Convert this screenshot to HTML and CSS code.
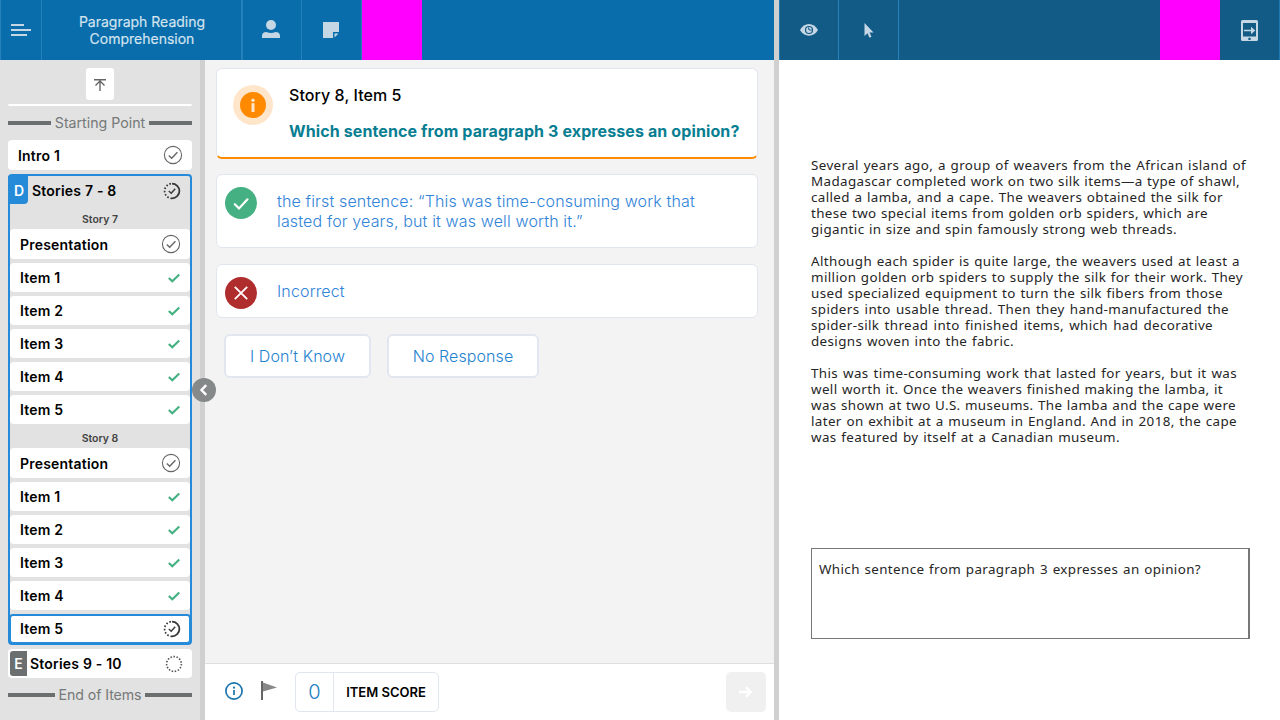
FILE: index.html
```html
<!DOCTYPE html>
<html lang="en">
<head>
<meta charset="utf-8">
<title>Paragraph Reading Comprehension</title>
<link rel="stylesheet" href="styles.css">
</head>
<body>
<svg class="defs" width="0" height="0">
  <symbol id="done" viewBox="0 0 20 20"><circle cx="10" cy="10" r="8.6" fill="none" stroke="#666" stroke-width="1.1"/><path d="M5.8 10.5 8.7 13.2 14.4 7.2" fill="none" stroke="#666" stroke-width="1.4"/></symbol>
  <symbol id="progress" viewBox="0 0 20 20"><path d="M10 2.600a7.400 7.400 0 0 1 0 14.800" fill="none" stroke="#383838" stroke-width="1.800"/><path d="M10 17.400a7.400 7.400 0 0 1 0-14.800" fill="none" stroke="#383838" stroke-width="1.700" stroke-dasharray="1.6 1.8"/><path d="M6.8 10 9.2 12.2 13.2 7.7" fill="none" stroke="#383838" stroke-width="1.4"/></symbol>
  <symbol id="pending" viewBox="0 0 20 20"><circle cx="10" cy="10" r="7.4" fill="none" stroke="#555" stroke-width="1.6" stroke-dasharray="1.5 1.6"/></symbol>
  <symbol id="check" viewBox="0 0 12 10"><path d="M.8 5 4.3 8.2 11.3 1.5" fill="none" stroke="#45b081" stroke-width="2.2"/></symbol>
</svg>
<div class="app">
  <section class="examiner">
    <header class="bar bar-main">
      <div class="cell menu"><svg width="20" height="12"><path d="M0 1h13M0 6h20M0 11h16" stroke="#c5d6e4" stroke-width="2"/></svg></div>
      <div class="cell heading">Paragraph Reading<br>Comprehension</div>
      <div class="cell person"><svg width="18" height="18"><circle cx="9" cy="5" r="5" fill="#c5d6e4"/><path d="M0 18v-2q0-4 4.500-4 4.500 1.800 9 0 4.500 0 4.500 4v2z" fill="#c5d6e4"/></svg></div>
      <div class="cell note"><svg width="16" height="16"><path d="M0 0h16v10h-6v6H0z" fill="#c5d6e4"/><path d="M11.500 15.500v-4h4z" fill="#c5d6e4"/></svg></div>
      <div class="cell mask"></div>
    </header>
    <div class="workspace">
      <nav class="sidebar">
        <button class="top"><svg width="14" height="14"><path d="M1 1.700h12M7 13V3M2.500 7.500 7 3l4.500 4.500" fill="none" stroke="#666" stroke-width="1.400"/></svg></button>
        <div class="sliver"></div>
        <div class="rule start"><span>Starting Point</span></div>
        <div class="row intro"><span>Intro 1</span><svg class="ic"><use href="#done"/></svg></div>
        <div class="group">
          <div class="group-head"><b class="badge">D</b><span>Stories 7 - 8</span><svg class="ic"><use href="#progress"/></svg></div>
          <div class="story">Story 7</div>
          <div class="row pres"><span>Presentation</span><svg class="ic"><use href="#done"/></svg></div>
          <div class="row"><span>Item 1</span><svg class="ck"><use href="#check"/></svg></div>
          <div class="row"><span>Item 2</span><svg class="ck"><use href="#check"/></svg></div>
          <div class="row"><span>Item 3</span><svg class="ck"><use href="#check"/></svg></div>
          <div class="row"><span>Item 4</span><svg class="ck"><use href="#check"/></svg></div>
          <div class="row"><span>Item 5</span><svg class="ck"><use href="#check"/></svg></div>
          <div class="story second">Story 8</div>
          <div class="row pres"><span>Presentation</span><svg class="ic"><use href="#done"/></svg></div>
          <div class="row"><span>Item 1</span><svg class="ck"><use href="#check"/></svg></div>
          <div class="row"><span>Item 2</span><svg class="ck"><use href="#check"/></svg></div>
          <div class="row"><span>Item 3</span><svg class="ck"><use href="#check"/></svg></div>
          <div class="row"><span>Item 4</span><svg class="ck"><use href="#check"/></svg></div>
          <div class="row current"><span>Item 5</span><svg class="ic"><use href="#progress"/></svg></div>
        </div>
        <div class="row next"><b class="badge gray">E</b><span>Stories 9 - 10</span><svg class="ic"><use href="#pending"/></svg></div>
        <div class="rule end"><span>End of Items</span></div>
      </nav>
      <div class="divider"><button class="collapse"><svg width="24" height="24"><path d="M14.200 7.200 9.500 12l4.700 4.800" fill="none" stroke="#fff" stroke-width="2.400"/></svg></button></div>
      <main class="main">
        <div class="content">
          <div class="card question">
            <svg width="40" height="40"><circle cx="20" cy="20" r="20" fill="#ffe6cb"/><circle cx="20" cy="20" r="13" fill="#ff8a00"/><circle cx="20" cy="15.300" r="1.700" fill="#ffe6cb"/><path d="M20 18.200v8.800" stroke="#ffe6cb" stroke-width="3"/></svg>
            <div><div class="q-title">Story 8, Item 5</div><div class="q-text">Which sentence from paragraph 3 expresses an opinion?</div></div>
          </div>
          <div class="card answer long"><svg width="32" height="32"><circle cx="16" cy="16" r="16" fill="#45b081"/><path d="M9.800 17.200 14 21.400 22.500 12.300" fill="none" stroke="#fff" stroke-width="2.200" stroke-linecap="round"/></svg><p>the first sentence: “This was time-consuming work that<br>lasted for years, but it was well worth it.”</p></div>
          <div class="card answer"><svg width="32" height="32"><circle cx="16" cy="16" r="16" fill="#b02d2d"/><path d="M9.800 9.800 22.200 22.200M22.200 9.800 9.800 22.200" stroke="#fff" stroke-width="1.800"/></svg><p>Incorrect</p></div>
          <div class="choices"><button class="idk">I Don’t Know</button><button class="nr">No Response</button></div>
        </div>
        <footer class="footer">
          <svg width="18" height="18"><circle cx="9" cy="9" r="8.100" fill="none" stroke="#1b75ac" stroke-width="1.700"/><circle cx="9" cy="5.700" r="1.100" fill="#1b75ac"/><path d="M9 8v5" stroke="#1b75ac" stroke-width="1.700"/></svg>
          <svg class="flag" width="16" height="20"><path d="M1 0v19" stroke="#666" stroke-width="2"/><path d="M2 1.500 16 6.500 2 10.500z" fill="#888"/></svg>
          <div class="score"><span class="num">0</span><span class="label">ITEM SCORE</span></div>
          <button class="go"><svg width="14" height="12"><path d="M0 6h11.500M7 1.200 11.700 6 7 10.800" fill="none" stroke="#fff" stroke-width="2.400"/></svg></button>
        </footer>
      </main>
    </div>
  </section>
  <div class="splitter"></div>
  <section class="examinee">
    <header class="bar bar-side">
      <div class="cell eye"><svg width="18" height="12"><path d="M0 6C4-2 14-2 18 6 14 13.500 4 13.500 0 6z" fill="#c5d6e4"/><circle cx="9" cy="6" r="3.500" fill="none" stroke="#125b86" stroke-width="1.200"/><path d="M8.500 3.500q-.2 3 3.200 2.500" fill="none" stroke="#125b86" stroke-width="1.100"/></svg></div>
      <div class="cell pointer"><svg width="10" height="15"><path d="M.5 0v13l3-2.700 2 4.400 2-.9-2-4.200h4z" fill="#c5d6e4"/></svg></div>
      <div class="cell mask"></div>
      <div class="cell device"><svg width="17" height="21"><rect width="17" height="21" rx="1.500" fill="#c5d6e4"/><path d="M2 3h13v13.500H2z" fill="#125b86"/><path d="M3 10.500h8" stroke="#c5d6e4" stroke-width="1.500"/><path d="M10 6.700v7.600l4.300-3.800z" fill="#c5d6e4"/><rect x="7.300" y="17.700" width="2.400" height="2.400" rx=".7" fill="#125b86"/></svg></div>
    </header>
    <article class="passage">
      <p><span style="width:435px">Several years ago, a group of weavers from the African island of</span><span style="width:429px">Madagascar completed work on two silk items—a type of shawl,</span><span style="width:412px">called a lamba, and a cape. The weavers obtained the silk for</span><span style="width:397px">these two special items from golden orb spiders, which are</span><span style="width:366px">gigantic in size and spin famously strong web threads.</span></p>
      <p><span style="width:429px">Although each spider is quite large, the weavers used at least a</span><span style="width:432px">million golden orb spiders to supply the silk for their work. They</span><span style="width:412px">used specialized equipment to turn the silk fibers from those</span><span style="width:418px">spiders into usable thread. Then they hand-manufactured the</span><span style="width:402px">spider-silk thread into finished items, which had decorative</span><span style="width:203px">designs woven into the fabric.</span></p>
      <p><span style="width:426px">This was time-consuming work that lasted for years, but it was</span><span style="width:412px">well worth it. Once the weavers finished making the lamba, it</span><span style="width:425px">was shown at two U.S. museums. The lamba and the cape were</span><span style="width:426px">later on exhibit at a museum in England. And in 2018, the cape</span><span style="width:309px">was featured by itself at a Canadian museum.</span></p>
    </article>
    <div class="prompt"><span style="width:382px">Which sentence from paragraph 3 expresses an opinion?</span></div>
  </section>
</div>
</body>
</html>
```
FILE: styles.css
```css
* { box-sizing: border-box; }
body { margin: 0; font-family: Inter, sans-serif; color: #000; }
button { font: inherit; padding: 0; border: 0; display: flex; align-items: center; justify-content: center; }
p { margin: 0; }
svg { display: block; flex: none; }
.defs { position: absolute; }
.app { display: flex; width: 1280px; height: 720px; overflow: hidden; background: #fff; }
.examiner { width: 774px; display: flex; flex-direction: column; }
.splitter { width: 5px; background: #d0d0d0; }
.examinee { width: 501px; }

.bar { display: flex; height: 60px; }
.bar-main { background: #0a6dab; border-left: 1px solid #2680ba; }
.bar-side { background: #125b86; border-left: 1px solid #1e79b2; border-right: 1px solid #1e79b2; }
.cell { display: flex; align-items: center; justify-content: center; border-right: 1px solid #2680ba; }
.menu { width: 41px; }
.heading { width: 201px; border-right-width: 2px; font-size: 14px; line-height: 17px; text-align: center; color: #d5e5f0; padding-left: 1px; -webkit-text-stroke: .15px #d5e5f0; }
.person { width: 59px; padding: 0 2px 2px 0; }
.note { width: 60px; padding-right: 2px; }
.mask { width: 60px; background: #f0f; border: 0; }
.eye { width: 59px; }
.pointer { width: 60px; }
.bar-side .mask { margin-left: auto; }
.device { width: 59px; border: 0; }

.workspace { flex: 1; display: flex; }
.sidebar { width: 200px; padding: 8px 8px 0; background: #e2e2e2; font-size: 14px; font-weight: 600; }
.top { width: 28px; height: 32px; margin: 0 auto; background: #fff; border-radius: 3px; }
.top svg { margin-top: 2px; }
.sliver { height: 2px; margin-top: 4px; background: #fff; border-radius: 0 0 4px 4px; }
.rule { display: flex; align-items: center; gap: 4px; height: 18px; font-size: 14.2px; font-weight: 400; color: #757979; white-space: nowrap; }
.rule span { margin-top: -2px; }
.rule::before, .rule::after { content: ""; flex: 1; height: 4px; margin-top: -1px; background: #6b6f6f; }
.start { margin: 8px 0; }
.row { display: flex; align-items: center; justify-content: space-between; height: 29px; margin-bottom: 4px; padding: 0 10px; background: #fff; border-radius: 4px; }
.row span, .group-head span { letter-spacing: .2px; }
.intro { height: 30px; padding: 1px 9px 0 10px; }
.ic { width: 20px; height: 20px; margin-top: -2px; }
.ck { width: 12px; height: 10px; }
.group { height: 471px; border: 2px solid #258bd9; border-radius: 4px; }
.group-head { display: flex; align-items: center; height: 30px; padding-right: 8px; }
.group-head span { margin-top: -1px; }
.group-head .ic { margin-left: auto; margin-top: 0; }
.badge { display: flex; align-items: center; justify-content: center; width: 20px; height: 29px; padding-left: 2px; padding-top: 2px; margin: -3px 4px 0 -2px; background: #258bd9; color: #fff; border-radius: 3px 0 4px 0; font-weight: 600; }
.story { height: 23px; line-height: 27px; font-size: 10.5px; text-align: center; color: #444; }
.second { height: 20px; line-height: 21px; }
.group .pres { height: 30px; padding: 1px 9px 0 10px; }
.group .current { height: 30px; margin: 0 -1px; padding: 0 7px 1px 9px; border: 2px solid #258bd9; }
.current .ic { margin-top: 1px; }
.next { margin-top: 4px; padding: 0 8px 0 2px; }
.next .ic { margin-left: auto; margin-top: 0; }
.gray { width: 17px; height: 25px; padding: 0; margin: 0 3px 0 0; background: #6b6f6f; border-radius: 3px 0 0 3px; }
.end { margin-top: 8px; }
.end span { letter-spacing: -.1px; }

.divider { width: 5px; position: relative; background: #d0d0d0; }
.collapse { position: absolute; left: -8px; top: 318px; width: 24px; height: 24px; border-radius: 50%; background: #858989; z-index: 1; }
.main { flex: 1; display: flex; flex-direction: column; background: #f3f3f3; }
.content { flex: 1; padding: 8px 16px 0 11px; }
.card { display: flex; background: #fff; border: 1px solid #e2e6f0; border-radius: 6px; }
.question { height: 91px; padding: 16px 0 0 16px; gap: 16px; border-bottom: 2px solid #ff8a00; }
.q-title { font-size: 16px; line-height: 20px; font-weight: 500; letter-spacing: .07px; }
.q-text { margin-top: 16px; font-size: 16px; line-height: 20px; font-weight: 700; color: #087e92; white-space: nowrap; letter-spacing: .11px; }
.answer { height: 54px; margin-top: 16px; padding: 12px 8px 0; gap: 20px; color: #2f83d8; font-size: 16px; line-height: 20px; font-weight: 300; letter-spacing: .15px; }
.answer p { margin-top: 4px; }
.long { height: 74px; margin-top: 15px; }
.choices { display: flex; gap: 16px; margin: 16px 0 0 8px; }
.choices button { height: 44px; border: 2px solid #e2e6f0; border-radius: 6px; background: #fff; color: #2382d0; font-size: 16px; font-weight: 300; letter-spacing: .08px; }
.idk { width: 147px; }
.nr { width: 152px; }
.footer { height: 57px; display: flex; align-items: center; padding: 0 8px 0 20px; background: #fff; border-top: 1px solid #dedede; }
.footer > svg:first-child { margin-top: -2px; }
.footer .flag { margin: -2px 0 0 18px; }
.score { display: flex; width: 144px; height: 40px; margin-left: 18px; border: 1px solid #e2e6f0; border-radius: 5px; }
.num { width: 38px; line-height: 39px; border-right: 1px solid #e2e6f0; text-align: center; font-size: 20px; font-weight: 300; color: #1b7cc0; }
.label { flex: 1; line-height: 38px; text-align: center; font-size: 13px; font-weight: 600; }
.go { width: 40px; height: 40px; margin-left: auto; background: #f0f0f0; border-radius: 5px; }

.passage { padding: 97px 0 0 32px; }
.passage, .prompt { font-family: "Noto Sans", sans-serif; font-size: 13.4px; line-height: 16px; letter-spacing: .38px; color: #252525; }
.passage p + p { margin-top: 16px; }
.passage span, .prompt span { display: block; white-space: nowrap; text-align-last: justify; }
.prompt { width: 439px; height: 91px; margin: 103px 0 0 32px; padding: 12px 7px; border: 1px solid #777; border-right-width: 2px; }
```
